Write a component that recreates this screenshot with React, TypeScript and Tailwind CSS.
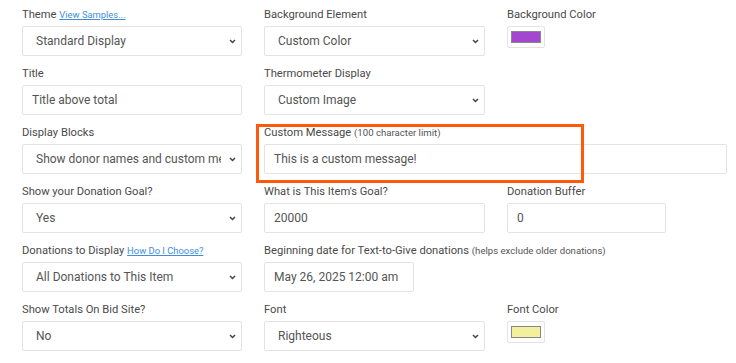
import React from 'react'

const inputCls = "block h-[30px] w-full rounded-[2px] border border-[#e3e3e3] bg-white px-[9px] text-[12px] text-[#555] outline-none"
const selectCls = "block h-[30px] w-full appearance-none rounded-[2px] border border-[#e3e3e3] bg-white pl-[13px] pr-[20px] text-[12px] text-[#555] outline-none"

const Label: React.FC<{ children: React.ReactNode }> = ({ children }) => (
  <label className="mb-[3px] block h-[16px] whitespace-nowrap text-[11.2px] leading-[16px] text-[#4a4a4a]">{children}</label>
)

const Hint: React.FC<{ children: React.ReactNode }> = ({ children }) => (
  <span className="text-[9.6px] text-[#555]">{children}</span>
)

const HelpLink: React.FC<{ children: React.ReactNode }> = ({ children }) => (
  <a href="#" className="text-[9.4px] text-[#3d8fd9] underline">{children}</a>
)

const Select: React.FC<{ value: string; options: string[] }> = ({ value, options }) => (
  <div className="relative">
    <select defaultValue={value} className={selectCls}>
      {options.map((o) => (
        <option key={o}>{o}</option>
      ))}
    </select>
    <svg className="pointer-events-none absolute right-[6px] top-[13px]" width="7" height="5" viewBox="0 0 7 5">
      <path d="M1 1l2.5 2.5L6 1" fill="none" stroke="#444" strokeWidth="1.5" />
    </svg>
  </div>
)

const Swatch: React.FC<{ color: string }> = ({ color }) => (
  <div className="flex h-[22px] w-[38px] items-center justify-center rounded-[2px] border border-[#e3e3e3] bg-white">
    <div className="h-[12px] w-[30px] border border-[#888]" style={{ backgroundColor: color }} />
  </div>
)

const App: React.FC = () => {
  return (
    <div className="min-h-[363px] bg-white pl-[22px] pt-[7px]" style={{ fontFamily: 'Roboto, "Liberation Sans", sans-serif' }}>
      <form action="#" className="grid w-[705px] grid-cols-[220px_221px_220px] gap-x-[22px] gap-y-[10px]">
        <div>
          <Label>Theme <HelpLink>View Samples...</HelpLink></Label>
          <Select value="Standard Display" options={["Standard Display", "Compact Display"]} />
        </div>
        <div>
          <Label>Background Element</Label>
          <Select value="Custom Color" options={["Custom Color", "Custom Image"]} />
        </div>
        <div>
          <Label>Background Color</Label>
          <Swatch color="#a347d1" />
        </div>

        <div>
          <Label>Title</Label>
          <input type="text" defaultValue="Title above total" className={inputCls} />
        </div>
        <div>
          <Label>Thermometer Display</Label>
          <Select value="Custom Image" options={["Custom Image", "Thermometer"]} />
        </div>
        <div />

        <div>
          <Label>Display Blocks</Label>
          <Select value="Show donor names and custom message" options={["Show donor names and custom message", "Show totals only"]} />
        </div>
        <div className="relative col-span-2">
          <Label>Custom Message <Hint>(100 character limit)</Hint></Label>
          <input type="text" defaultValue="This is a custom message!" className={inputCls} />
          <div className="pointer-events-none absolute left-[-8px] top-[-1px] h-[59px] w-[328px] border-[3px] border-[#ff5a0a]" />
        </div>

        <div>
          <Label>Show your Donation Goal?</Label>
          <Select value="Yes" options={["Yes", "No"]} />
        </div>
        <div>
          <Label>What is This Item's Goal?</Label>
          <input type="text" defaultValue="20000" className={inputCls} />
        </div>
        <div>
          <Label>Donation Buffer</Label>
          <input type="text" defaultValue="0" className={inputCls + " !w-[159px]"} />
        </div>

        <div>
          <Label>Donations to Display <HelpLink>How Do I Choose?</HelpLink></Label>
          <Select value="All Donations to This Item" options={["All Donations to This Item", "Text-to-Give Only"]} />
        </div>
        <div className="col-span-2">
          <Label>Beginning date for Text-to-Give donations <Hint>(helps exclude older donations)</Hint></Label>
          <input type="text" defaultValue="May 26, 2025 12:00 am" className={inputCls + " !w-[150px]"} />
        </div>

        <div>
          <Label>Show Totals On Bid Site?</Label>
          <Select value="No" options={["Yes", "No"]} />
        </div>
        <div>
          <Label>Font</Label>
          <Select value="Righteous" options={["Righteous", "Roboto", "Lato"]} />
        </div>
        <div>
          <Label>Font Color</Label>
          <Swatch color="#f3f09b" />
        </div>
      </form>
    </div>
  )
}

export default App
